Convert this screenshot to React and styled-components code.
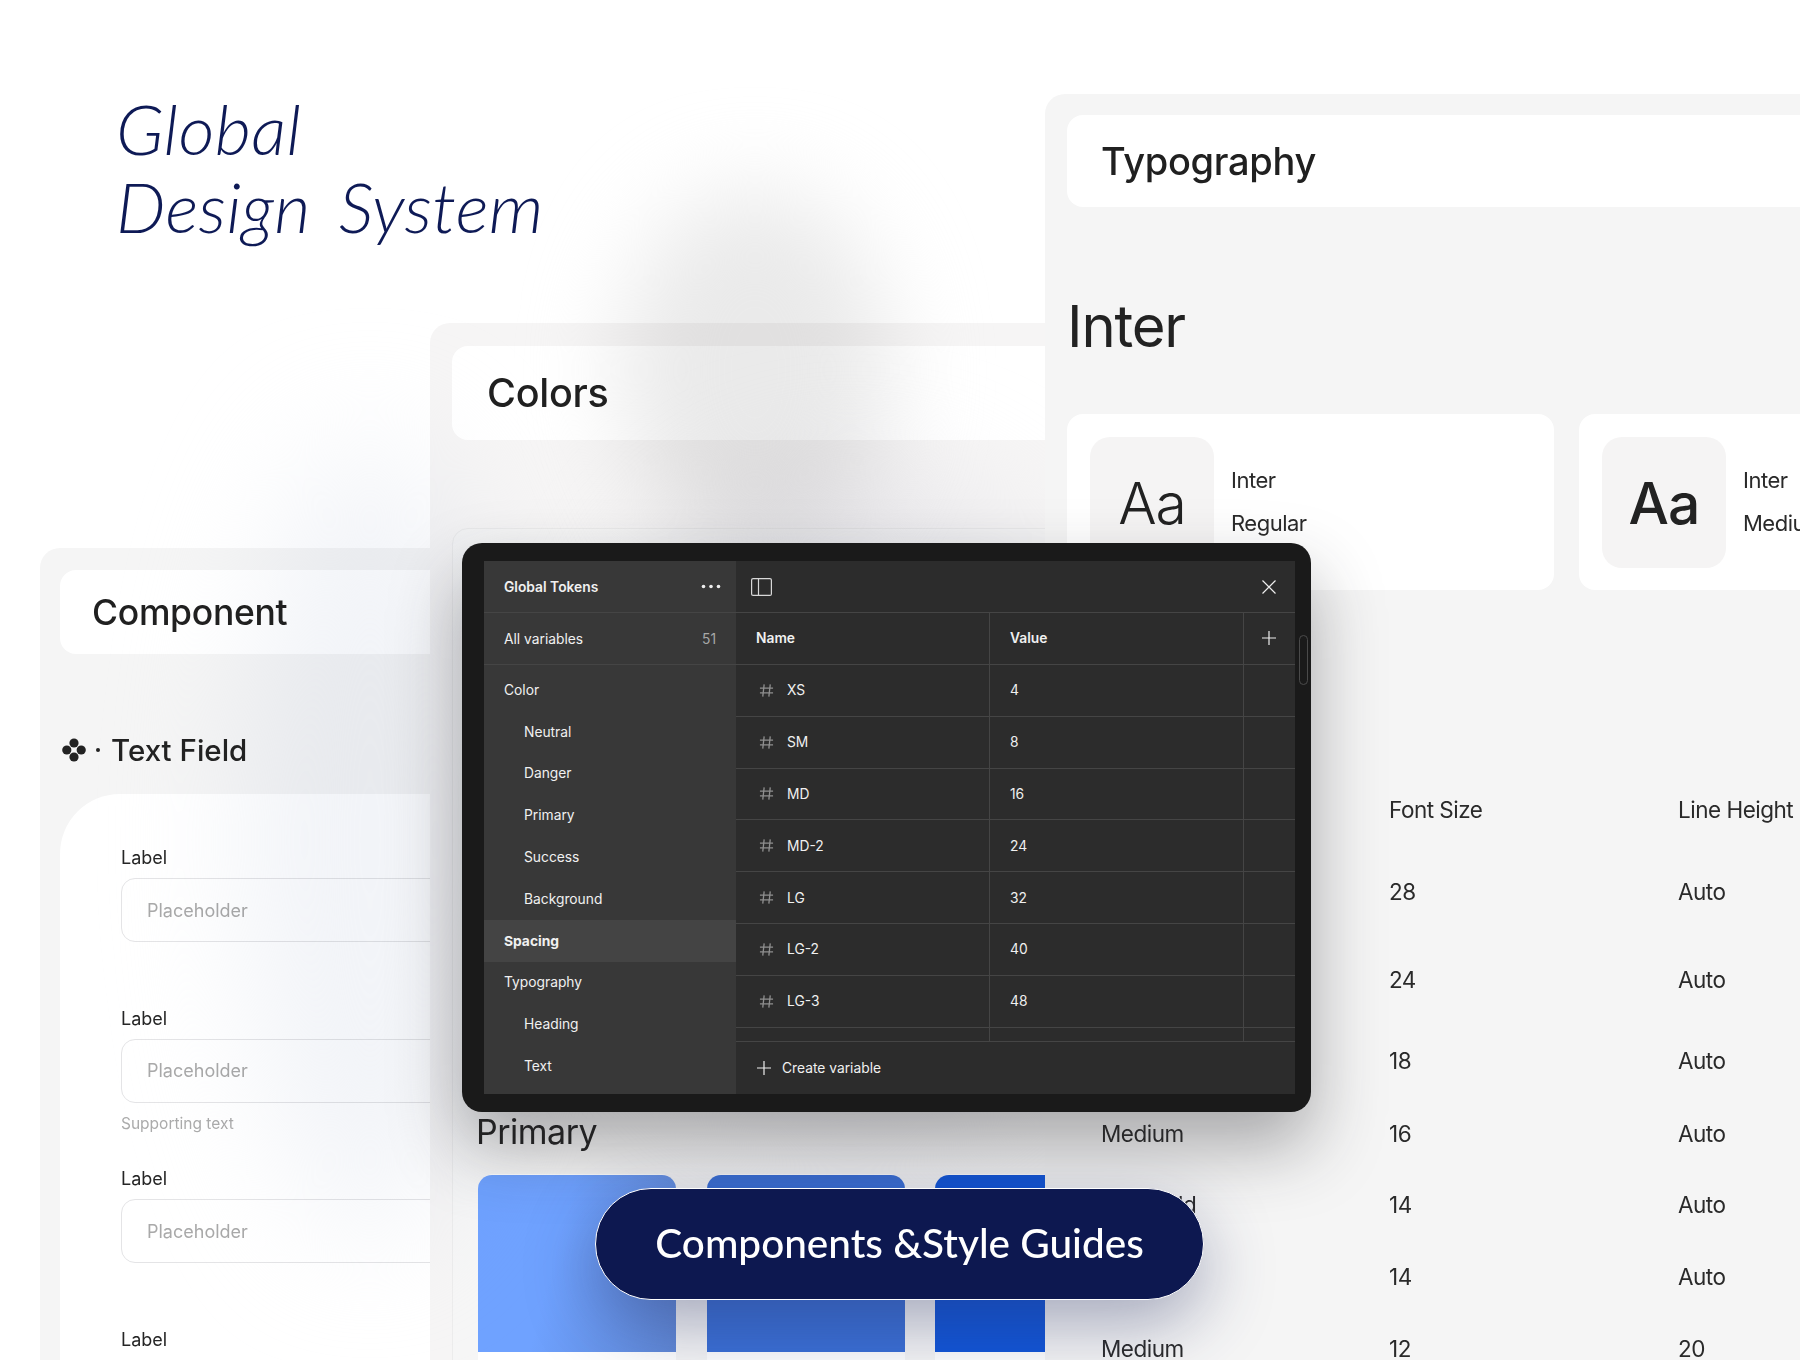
import React from 'react'
import styled, { createGlobalStyle } from 'styled-components'

const GlobalStyle = createGlobalStyle`
  * { box-sizing: border-box; }
  html, body { margin: 0; background: #fff; }
  body { font-family: Inter, "Liberation Sans", sans-serif; color: #1f1f1f; }
`

const Canvas = styled.div`
  position: relative;
  isolation: isolate;
  width: 1800px;
  height: 1360px;
  overflow: hidden;
  background: #fff;
`

const Title = styled.h1`
  position: absolute;
  left: 116px;
  top: 89px;
  margin: 0;
  font-family: Lato, "Noto Sans", sans-serif;
  font-size: 70px;
  line-height: 78px;
  font-weight: 300;
  font-style: italic;
  letter-spacing: 0.35px;
  word-spacing: -4px;
  color: #0e1a56;
  white-space: pre;
`

const Window = styled.section`
  position: absolute;
  left: ${({ $left }) => $left}px;
  top: ${({ $top }) => $top}px;
  width: ${({ $width }) => $width}px;
  height: ${({ $height }) => $height}px;
  z-index: ${({ $z }) => $z};
  padding: ${({ $pad }) => $pad};
  background: ${({ $bg }) => $bg || '#f5f5f5'};
  border-radius: 20px 0 0 0;
  overflow: hidden;
`

const Blob = styled.div`
  position: absolute;
  left: ${({ $left }) => $left}px;
  top: ${({ $top }) => $top}px;
  width: ${({ $width }) => $width}px;
  height: ${({ $height }) => $height}px;
  z-index: 3;
  border-radius: 50%;
  background: ${({ $color }) => $color};
  filter: blur(${({ $blur }) => $blur}px);
  mix-blend-mode: multiply;
  pointer-events: none;
`

const HeaderCard = styled.div`
  display: flex;
  align-items: center;
  height: ${({ $height }) => $height}px;
  padding-left: ${({ $indent }) => $indent}px;
  background: #fff;
  border-radius: 16px;
  font-size: ${({ $size }) => $size}px;
  font-weight: 500;
  color: #202020;
  letter-spacing: -0.3px;
`

/* component panel */
const SectionTitle = styled.div`
  display: flex;
  align-items: center;
  height: 140px;
  padding: 52px 0 0 2px;
  font-size: 29.5px;
  font-weight: 500;
  color: #222;
  gap: 10px;
`

const Bullet = styled.span`
  width: 4px;
  height: 4px;
  border-radius: 50%;
  background: #222;
  margin-right: 1px;
`

const FieldCard = styled.div`
  height: 620px;
  padding: 53px 0 0 61px;
  border-radius: 60px 0 0 0;
  background: #fff;
`

const Field = styled.div`
  height: 160.5px;
`

const Label = styled.div`
  font-size: 18px;
  line-height: 22px;
  color: #252525;
`

const Input = styled.div`
  display: flex;
  align-items: center;
  height: 64px;
  margin-top: 9px;
  padding-left: 25px;
  border: 1px solid #e4e4e6;
  border-radius: 14px;
  font-size: 18px;
  color: #a9a9a9;
`

const Support = styled.div`
  margin-top: 11px;
  font-size: 15.5px;
  color: #ababab;
`

/* colors panel */
const PaletteCard = styled.div`
  height: 900px;
  margin-top: 88px;
  padding: 0 0 0 25px;
  border: 1px solid #ececec;
  border-radius: 16px;
  background: #f6f6f6;
`

const PaletteTitle = styled.div`
  margin: 578px 0 0 -2px;
  height: 50px;
  font-size: 34px;
  line-height: 50px;
  letter-spacing: -0.5px;
  color: #222;
`

const Swatches = styled.div`
  display: flex;
  gap: 30.5px;
  margin-top: 17px;
`

const Swatch = styled.div`
  width: 198px;
  flex: none;
  background: #fff;
  border-radius: 16px 16px 0 0;
  padding-top: 1px;
  height: 240px;
`

const SwatchColor = styled.div`
  height: 177px;
  border-radius: 14px 14px 0 0;
  background: ${({ $fill }) => $fill};
`

/* typography panel */
const FontHeading = styled.div`
  height: 207px;
  padding-top: 84px;
  font-size: 58px;
  line-height: 70px;
  letter-spacing: -1.2px;
  color: #222;
`

const FontCards = styled.div`
  display: flex;
  gap: 25px;
`

const FontCard = styled.div`
  display: flex;
  flex: none;
  align-items: center;
  gap: 17px;
  width: 487px;
  height: 176px;
  padding-left: 23px;
  background: #fff;
  border-radius: 16px;
`

const Sample = styled.div`
  display: flex;
  align-items: center;
  justify-content: center;
  width: 124px;
  height: 131px;
  padding-top: 2px;
  border-radius: 20px;
  background: #f5f4f4;
  font-size: 57px;
  font-weight: ${({ $weight }) => $weight};
  letter-spacing: -1px;
  color: #222;
`

const FontMeta = styled.div`
  display: flex;
  flex-direction: column;
  gap: 18px;
  font-size: 22px;
  line-height: 25px;
  letter-spacing: -0.5px;
  color: #2a2a2a;
`

const SpecTable = styled.div`
  margin-top: 206px;
  margin-left: 34px;
`

const SpecRow = styled.div`
  display: grid;
  grid-template-columns: 288px 289px 1fr;
  height: ${({ $height }) => $height}px;
  font-size: 22.5px;
  line-height: 28px;
  letter-spacing: -0.5px;
  color: #2a2a2a;
`

/* dark variables dialog */
const Dialog = styled.div`
  position: absolute;
  left: 462px;
  top: 543px;
  z-index: 6;
  width: 849px;
  height: 569px;
  padding: 18px 16px 18px 22px;
  background: #1a1a1a;
  border-radius: 20px;
  box-shadow: 0 34px 70px rgba(40, 40, 45, 0.38);
`

const Scrollbar = styled.div`
  position: absolute;
  left: 837px;
  top: 92px;
  width: 9px;
  height: 50px;
  border: 1px solid #4a4a4a;
  border-radius: 5px;
`

const DialogBody = styled.div`
  display: grid;
  grid-template-columns: 252px 559px;
  height: 533px;
  color: #f0f0f0;
  font-size: 13.8px;
`

const Sidebar = styled.div`
  background: #383838;
`

const SideHead = styled.div`
  display: flex;
  align-items: center;
  justify-content: space-between;
  height: ${({ $height }) => $height}px;
  padding: 0 ${({ $right }) => $right}px 0 20px;
  border-bottom: 1px solid #454545;
  font-weight: ${({ $bold }) => ($bold ? 600 : 400)};
`

const Count = styled.span`
  color: #a8a8a8;
`

const SideList = styled.div`
  padding-top: 4px;
`

const SideItem = styled.div`
  display: flex;
  align-items: center;
  height: 41.8px;
  padding-left: ${({ $nested }) => ($nested ? 40 : 20)}px;
  font-weight: ${({ $active }) => ($active ? 700 : 400)};
  background: ${({ $active }) => ($active ? '#444' : 'transparent')};
`

const Main = styled.div`
  background: #2c2c2c;
`

const Toolbar = styled.div`
  display: flex;
  align-items: center;
  justify-content: space-between;
  height: 52px;
  padding: 0 18px 0 15px;
  border-bottom: 1px solid #454545;
`

const GridRow = styled.div`
  display: grid;
  grid-template-columns: 254px 254px 1fr;
  height: ${({ $height }) => $height || 51.85}px;
  border-bottom: 1px solid #454545;
`

const Cell = styled.div`
  display: flex;
  align-items: center;
  gap: 13px;
  padding-left: ${({ $pad }) => $pad}px;
  font-weight: ${({ $head }) => ($head ? 600 : 400)};
  border-right: ${({ $line }) => ($line ? '1px solid #454545' : 'none')};
`

const AddCell = styled(Cell)`
  justify-content: center;
  padding: 0 2px 0 0;
`

const Footer = styled.div`
  display: flex;
  align-items: center;
  gap: 10px;
  height: 52px;
  padding-left: 20px;
`

const Pill = styled.div`
  position: absolute;
  left: 595px;
  top: 1188px;
  z-index: 7;
  display: flex;
  align-items: center;
  justify-content: center;
  width: 609px;
  height: 112px;
  padding-bottom: 4px;
  border: 1px solid #fff;
  border-radius: 56px;
  background: #0d1850;
  box-shadow: 0 24px 70px rgba(40, 50, 100, 0.4);
  font-family: Lato, "Noto Sans", sans-serif;
  font-size: 40.5px;
  font-weight: 500;
  color: #fff;
  white-space: pre;
`

const Clover = () => (
  <svg width="24" height="24" viewBox="0 0 24 24" fill="#222">
    <circle cx="12" cy="5" r="4.6" />
    <circle cx="12" cy="19" r="4.6" />
    <circle cx="4.8" cy="12" r="4.6" />
    <circle cx="19.2" cy="12" r="4.6" />
  </svg>
)

const Line = ({ size = 16, d, color = '#eee', width = 1.2 }) => (
  <svg width={size} height={size} viewBox="0 0 16 16" fill="none" stroke={color} strokeWidth={width}>
    <path d={d} />
  </svg>
)

const PlusIcon = () => <Line d="M8 1v14M1 8h14" />
const CloseIcon = () => <Line d="M1.5 1.5l13 13M14.5 1.5l-13 13" />
const HashIcon = () => <Line size={15} color="#8f8f8f" width={1.4} d="M5.5 1.5L4 14.5M12 1.5L10.5 14.5M1 5.5h14M1 10.5h14" />

const PanelIcon = () => (
  <svg width="21" height="18" viewBox="0 0 21 18" fill="none" stroke="#d8d8d8" strokeWidth="1.2">
    <rect x="0.6" y="0.6" width="19.8" height="16.8" rx="1.5" />
    <path d="M7.5 0.6v16.8" />
  </svg>
)

const Dots = () => (
  <svg width="20" height="5" viewBox="0 0 20 5" fill="#eee">
    <circle cx="2.5" cy="2.5" r="1.8" />
    <circle cx="10" cy="2.5" r="1.8" />
    <circle cx="17.5" cy="2.5" r="1.8" />
  </svg>
)

const sideItems = [
  { name: 'Color' },
  { name: 'Neutral', nested: true },
  { name: 'Danger', nested: true },
  { name: 'Primary', nested: true },
  { name: 'Success', nested: true },
  { name: 'Background', nested: true },
  { name: 'Spacing', active: true },
  { name: 'Typography' },
  { name: 'Heading', nested: true },
  { name: 'Text', nested: true },
]

const tokens = [
  ['XS', 4],
  ['SM', 8],
  ['MD', 16],
  ['MD-2', 24],
  ['LG', 32],
  ['LG-2', 40],
  ['LG-3', 48],
]

// height is the distance to the next row, the reference spacing is uneven
const specs = [
  { h: 82, cells: ['Style', 'Font Size', 'Line Height'] },
  { h: 88, cells: ['Semibold', '28', 'Auto'] },
  { h: 81, cells: ['Semibold', '24', 'Auto'] },
  { h: 73, cells: ['Semibold', '18', 'Auto'] },
  { h: 71, cells: ['Medium', '16', 'Auto'] },
  { h: 72, cells: ['Semibold', '14', 'Auto'] },
  { h: 72, cells: ['Bold', '14', 'Auto'] },
  { h: 40, cells: ['Medium', '12', '20'] },
]

const fields = [{}, { support: 'Supporting text' }, {}, {}]

export default function App() {
  return (
    <Canvas>
      <GlobalStyle />
      <Title>{'Global\nDesign  System'}</Title>

      <Window $left={40} $top={548} $width={500} $height={812} $z={1} $pad="22px 0 0 20px">
        <HeaderCard $height={84} $indent={32} $size={35.5}>Component</HeaderCard>
        <SectionTitle>
          <Clover />
          <Bullet />
          Text Field
        </SectionTitle>
        <FieldCard>
          {fields.map((field, i) => (
            <Field key={i}>
              <Label>Label</Label>
              <Input>Placeholder</Input>
              {field.support && <Support>{field.support}</Support>}
            </Field>
          ))}
        </FieldCard>
      </Window>

      <Window $left={430} $top={323} $width={700} $height={1037} $z={2} $pad="23px 0 0 22px" $bg="#f6f5f5">
        <HeaderCard $height={94} $indent={35} $size={39.5}>Colors</HeaderCard>
        <PaletteCard>
          <PaletteTitle>Primary</PaletteTitle>
          <Swatches>
            <Swatch><SwatchColor $fill="linear-gradient(105deg, #6fa2ff 40%, #6088d6 100%)" /></Swatch>
            <Swatch><SwatchColor $fill="#3a6fd6" /></Swatch>
            <Swatch><SwatchColor $fill="#1155d8" /></Swatch>
          </Swatches>
        </PaletteCard>
      </Window>

      <Blob $left={620} $top={190} $width={270} $height={360} $blur={45} $color="rgb(234, 234, 234)" />
      <Blob $left={600} $top={480} $width={500} $height={640} $blur={60} $color="rgb(240, 240, 244)" />
      <Blob $left={240} $top={440} $width={260} $height={800} $blur={60} $color="rgb(242, 244, 248)" />

      <Window $left={1045} $top={94} $width={800} $height={1300} $z={4} $pad="21px 0 0 22px">
        <HeaderCard $height={92} $indent={34} $size={38}>Typography</HeaderCard>
        <FontHeading>Inter</FontHeading>
        <FontCards>
          <FontCard>
            <Sample $weight={300}>Aa</Sample>
            <FontMeta><span>Inter</span><span>Regular</span></FontMeta>
          </FontCard>
          <FontCard>
            <Sample $weight={500}>Aa</Sample>
            <FontMeta><span>Inter</span><span>Medium</span></FontMeta>
          </FontCard>
        </FontCards>
        <SpecTable>
          {specs.map(row => (
            <SpecRow key={row.cells.join()} $height={row.h}>
              {row.cells.map((c, i) => <span key={i}>{c}</span>)}
            </SpecRow>
          ))}
        </SpecTable>
      </Window>

      <Dialog>
        <Scrollbar />
        <DialogBody>
          <Sidebar>
            <SideHead $height={52} $right={15} $bold>Global Tokens <Dots /></SideHead>
            <SideHead $height={52} $right={20}>All variables <Count>51</Count></SideHead>
            <SideList>
              {sideItems.map(item => (
                <SideItem key={item.name} $nested={item.nested} $active={item.active}>{item.name}</SideItem>
              ))}
            </SideList>
          </Sidebar>
          <Main>
            <Toolbar><PanelIcon /><CloseIcon /></Toolbar>
            <GridRow>
              <Cell $pad={20} $head $line>Name</Cell>
              <Cell $pad={20} $head $line>Value</Cell>
              <AddCell><PlusIcon /></AddCell>
            </GridRow>
            {tokens.map(([name, value]) => (
              <GridRow key={name}>
                <Cell $pad={23} $line><HashIcon />{name}</Cell>
                <Cell $pad={20} $line>{value}</Cell>
                <Cell />
              </GridRow>
            ))}
            <GridRow $height={14}>
              <Cell $line />
              <Cell $line />
              <Cell />
            </GridRow>
            <Footer><PlusIcon />Create variable</Footer>
          </Main>
        </DialogBody>
      </Dialog>

      <Pill>Components &amp;Style Guides</Pill>
    </Canvas>
  )
}
